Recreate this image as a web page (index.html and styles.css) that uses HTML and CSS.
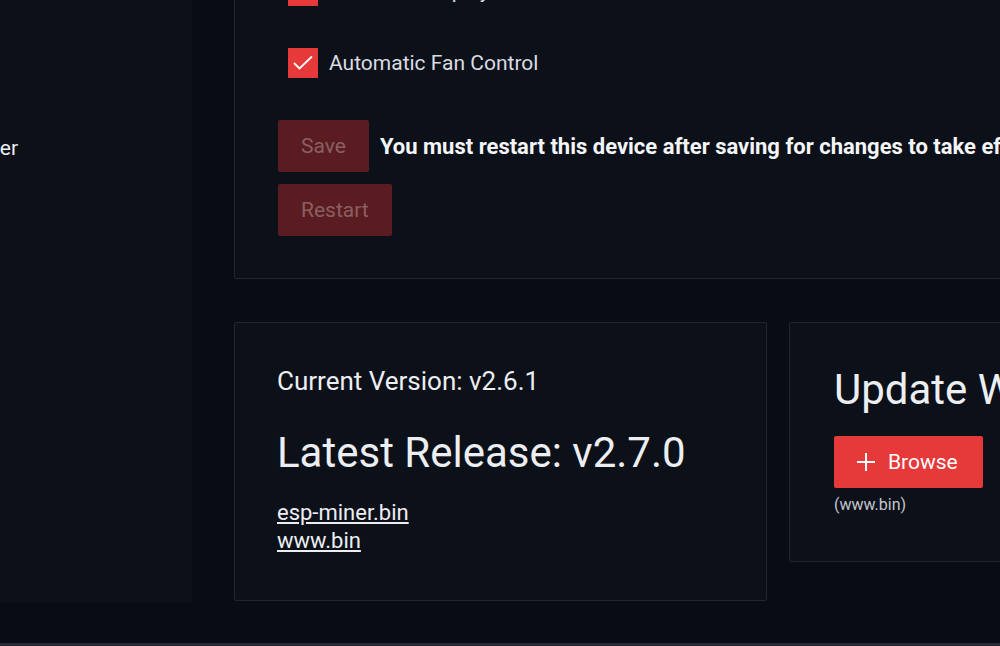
FILE: index.html
```html
<!DOCTYPE html>
<html lang="en">

<head>
    <meta charset="UTF-8">
    <meta name="viewport" content="width=device-width, initial-scale=1.0">
    <title>AxeOS - Settings</title>
    <link rel="stylesheet" href="styles.css">
</head>

<body>
    <div class="screen">
        <aside class="sidebar">
            <nav class="menu">
                <a class="menu-item active" href="#">Power</a>
            </nav>
        </aside>

        <main class="main">
            <section class="card settings">
                <label class="check">
                    <span class="box"><svg viewBox="0 0 30 30"><path d="M6 15l5.5 5.5L24 8.5" /></svg></span>
                    <span class="check-label">Invert the Display</span>
                </label>
                <label class="check">
                    <span class="box"><svg viewBox="0 0 30 30"><path d="M6 15l5.5 5.5L24 8.5" /></svg></span>
                    <span class="check-label">Automatic Fan Control</span>
                </label>

                <div class="actions">
                    <button class="btn" disabled>Save</button>
                    <b class="notice">You must restart this device after saving for changes to take effect.</b>
                </div>
                <div class="actions">
                    <button class="btn" disabled>Restart</button>
                </div>
            </section>

            <div class="row">
                <section class="card version">
                    <h3>Current Version: v2.6.1</h3>
                    <h2>Latest Release: v2.7.0</h2>
                    <a href="#">esp-miner.bin</a>
                    <a href="#">www.bin</a>
                </section>

                <section class="card update">
                    <h2>Update Website</h2>
                    <button class="btn browse">
                        <svg viewBox="0 0 20 20"><path d="M10 1v18M1 10h18" /></svg>
                        Browse
                    </button>
                    <div class="hint">(www.bin)</div>
                </section>
            </div>
        </main>
    </div>
    <div class="strip"></div>
</body>

</html>
```

FILE: styles.css
```css
body {
    margin: 0;
    height: 646px;
    display: flex;
    flex-direction: column;
    overflow: hidden;
    background-color: #090c14;
    font-family: 'Roboto', 'Noto Sans', sans-serif;
    color: #eceef2;
}

.screen {
    flex: 1;
    display: flex;
    align-items: flex-start;
    width: 1400px;
    margin: -65px 0 0 -68px;
}

/* sidebar, mostly cut off on the left */
.sidebar {
    flex: none;
    width: 260px;
    height: 668px;
    background-color: #0d1018;
}

.menu {
    display: flex;
    flex-direction: column;
    padding-top: 195px;
}

.menu-item {
    padding: 6px 0 6px 27px;
    font-size: 21px;
    color: #eceef2;
    text-decoration: none;
}

.main {
    flex: 1;
    display: flex;
    flex-direction: column;
    gap: 43px;
    padding-left: 42px;
}

.card {
    box-sizing: border-box;
    background-color: #0c1019;
    border: 1px solid #20252f;
    border-radius: 2px;
}

/* settings card */
.settings {
    padding: 40px 0 42px 43px;
}

.check {
    display: flex;
    align-items: center;
    gap: 11px;
    height: 30px;
    margin: 0 0 42px 10px;
    font-size: 21px;
    color: #d9dce2;
}

.box {
    width: 30px;
    height: 30px;
    background-color: #e5393a;
}

.box svg {
    display: block;
    width: 30px;
    height: 30px;
    fill: none;
    stroke: #fff;
    stroke-width: 1.8;
}

.actions {
    display: flex;
    align-items: center;
    gap: 11px;
    margin-bottom: 12px;
}

.actions:last-child {
    margin-bottom: 0;
}

.btn {
    height: 52px;
    padding: 0 23px;
    border: none;
    border-radius: 2px;
    background-color: #e5393a;
    color: #fff;
    font-family: inherit;
    font-size: 21px;
}

.btn:disabled {
    background-color: #5a1c20;
    color: #8a5f61;
}

.notice {
    font-size: 22px;
    font-weight: 700;
    white-space: nowrap;
    color: #f4f5f7;
}

/* version cards */
.row {
    display: grid;
    grid-template-columns: 533px 533px;
    gap: 22px;
    align-items: start;
}

.version {
    display: flex;
    flex-direction: column;
    align-items: flex-start;
    height: 279px;
    padding: 43px 42px 0;
}

.version h3 {
    margin: 0 0 32px;
    font-size: 26px;
    font-weight: 400;
}

.version h2 {
    margin: 0 0 22px;
    font-size: 42px;
    font-weight: 400;
}

.version a {
    font-size: 22px;
    line-height: 28px;
    color: #eceef2;
}

.update {
    height: 240px;
    padding: 42px 44px 0;
}

.update h2 {
    margin: 0 0 22px;
    font-size: 42px;
    font-weight: 400;
    white-space: nowrap;
}

.browse {
    display: flex;
    align-items: center;
    gap: 12px;
    width: 149px;
    padding-left: 22px;
}

.browse svg {
    width: 20px;
    height: 20px;
    fill: none;
    stroke: #fff;
    stroke-width: 2;
}

.hint {
    margin-top: 7px;
    font-size: 16px;
    color: #c3c7cf;
}

.strip {
    flex: none;
    height: 3px;
    background-color: #272b36;
}
```
